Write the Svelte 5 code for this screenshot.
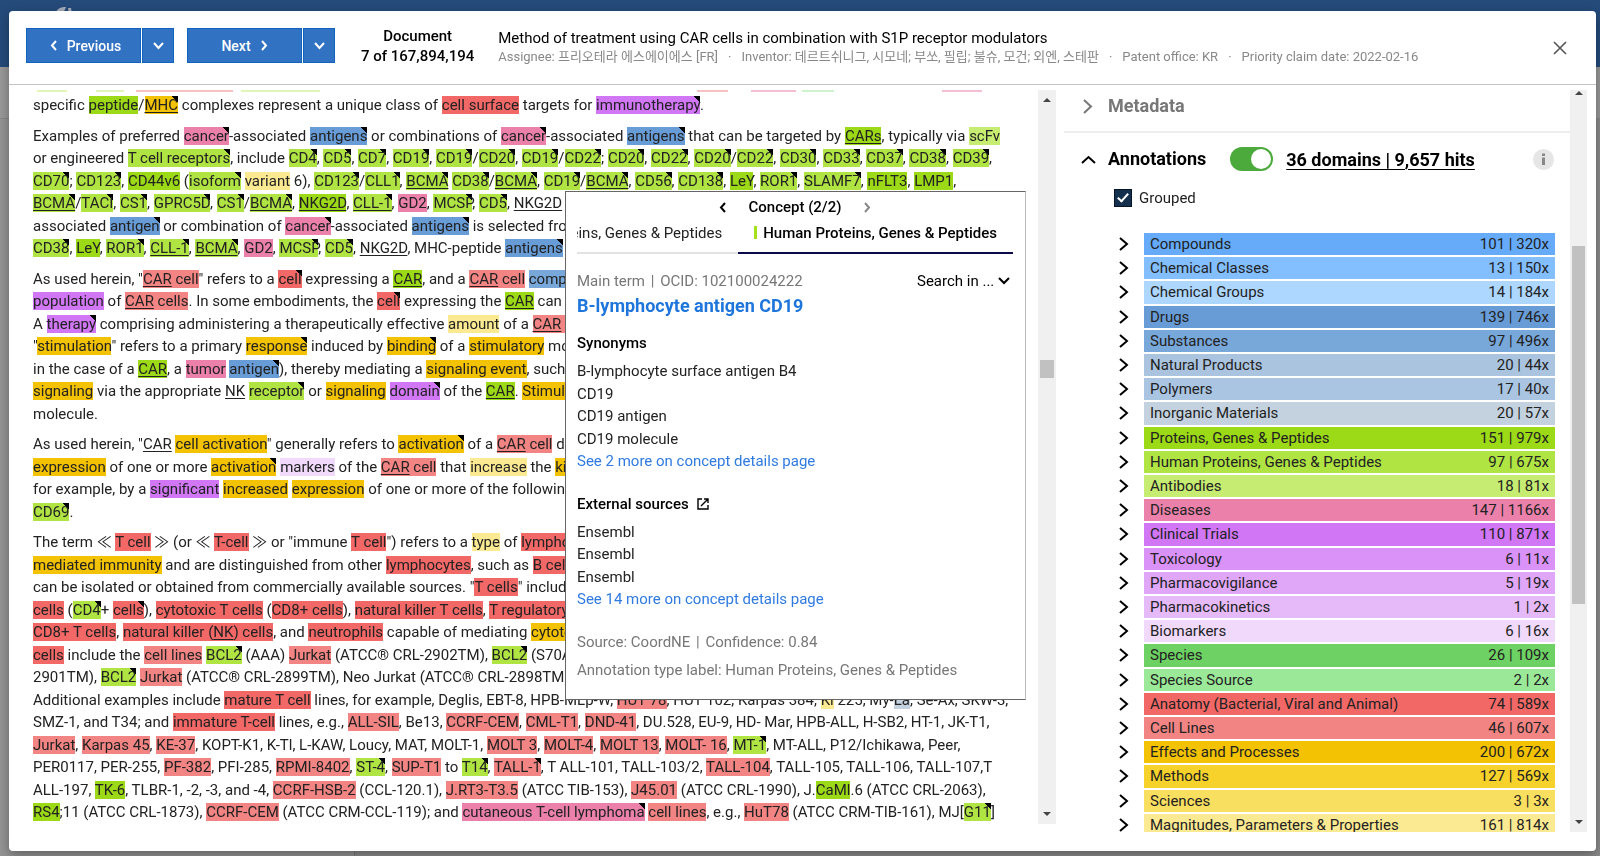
<script lang="ts">
  type Part = { text: string; underlined: boolean }
  type Token = { kind: string; corner: boolean; parts: Part[] }

  const colors: Record<string, string> = {
    compound: '#65abf9',
    chemClass: '#83beff',
    chemGroup: '#add7ff',
    drug: '#689cd6',
    substance: '#78a7da',
    natural: '#aac4e0',
    polymer: '#aac5e2',
    inorganic: '#c4d2df',
    protein: '#9cd917',
    human: '#b0e442',
    antibody: '#c6ec71',
    disease: '#eb81ab',
    clinical: '#d176f5',
    tox: '#da92f8',
    vigilance: '#e0a6f7',
    kinetics: '#e6baf8',
    biomarker: '#f0d9fb',
    species: '#6dd163',
    speciesSource: '#9be998',
    anatomy: '#f26867',
    cell: '#f28584',
    effect: '#f3c202',
    method: '#f7d22b',
    science: '#f9df5f',
    magnitude: '#fcea92',
  }

  // short codes used in the document markup: {code:text}, {code^:text} has a corner, _text_ is underlined
  const codes: Record<string, string> = {
    p: 'protein',
    h: 'human',
    b: 'antibody',
    d: 'disease',
    g: 'drug',
    s: 'substance',
    t: 'clinical',
    k: 'biomarker',
    a: 'anatomy',
    c: 'cell',
    e: 'effect',
    m: 'magnitude',
    i: 'inorganic',
  }

  const paragraphs = [
    [
      'specific {p:peptide}/{e^:_MHC_} complexes represent a unique class of {a:cell surface} targets for {t^:immunotherapy}.',
    ],
    [
      'Examples of preferred {d^:cancer}-associated {g^:antigens} or combinations of {d^:cancer}-associated {g^:antigens} that can be targeted by {p:_CARs_}, typically via {b:scFv}',
      'or engineered {h^:T cell receptors}, include {h^:CD4}, {h^:CD5}, {h^:CD7}, {h^:CD19}, {h^:CD19}/{h^:CD20}, {h^:CD19}/{h^:CD22}; {h^:CD20}, {h^:CD22}, {h^:CD20}/{h^:CD22}, {h^:CD30}, {h^:CD33}, {h^:CD37}, {h^:CD38}, {h^:CD39},',
      '{h^:CD70}; {h^:CD123}, {p:CD44v6} ({h^:isoform} {m:variant} 6), {h^:CD123}/{h^:CLL1}, {h^:_BCMA_} {h^:CD38}/{h^:_BCMA_}, {h^:CD19}/{h^:_BCMA_}, {h^:CD56}, {h^:CD138}, {p:LeY}, {h^:ROR1}, {h^:SLAMF7}, {p:nFLT3}, {p:LMP1},',
      '{h^:_BCMA_}/{h^:TACI}, {h^:CS1}, {h^:GPRC5D}, {h^:CS1}/{h^:_BCMA_}, {p:_NKG2D_}, {h^:_CLL-1_}, {d:GD2}, {h^:MCSP}, {h^:CD5}, _NKG2D_',
      'associated {g^:antigen} or combination of {d^:cancer}-associated {g^:antigens} is selected from',
      '{h^:CD38}, {p:LeY}, {h^:ROR1}, {h^:_CLL-1_}, {h^:_BCMA_}, {d:GD2}, {h^:MCSP}, {h^:CD5}, _NKG2D_, MHC-peptide {g^:antigens}',
    ],
    [
      'As used herein, "{c:_CAR_ cell}" refers to a {a^:cell} expressing a {p:_CAR_}, and a {c:_CAR_ cell} {s:compo}',
      '{t:population} of {c:_CAR_ cells}. In some embodiments, the {a^:cell} expressing the {p:_CAR_} can',
      'A {t^:therapy} comprising administering a therapeutically effective {m:amount} of a {c:_CAR_ c}',
      '"{e:stimulation}" refers to a primary {e^:response} induced by {e^:binding} of a {e:stimulatory} mo',
      'in the case of a {p:_CAR_}, a {d:tumor} {g^:antigen}), thereby mediating a {e:signaling event}, such',
      '{e:signaling} via the appropriate _NK_ {h^:receptor} or {e:signaling} {t^:domain} of the {p:_CAR_}. {e:Stimula}',
      'molecule.',
    ],
    [
      'As used herein, "_CAR_ {e:cell activation}" generally refers to {e^:activation} of a {c:_CAR_ cell} de',
      '{e:expression} of one or more {e^:activation} {k:markers} of the {c:_CAR_ cell} that {m:increase} the {e:kin}',
      'for example, by a {t:significant} {e:increased} {e:expression} of one or more of the following',
      '{h^:CD69}.',
    ],
    [
      'The term ≪ {a:T cell} ≫ (or ≪ {a:T-cell} ≫ or "immune {a:T cell}") refers to a {m:type} of {a:lymphocy}',
      '{e:mediated immunity} and are distinguished from other {a:lymphocytes}, such as {a:B cell}',
      'can be isolated or obtained from commercially available sources. "{a:T cells}" include',
      '{a:cells} ({h^:CD4}+ {a^:cells}), {a:cytotoxic T cells} ({a:CD8+ cells}), {a:natural killer T cells}, {a:T regulatory}',
      '{a:CD8+ T cells}, {a:natural killer (_NK_) cells}, and {a:neutrophils} capable of mediating {e:cytoto}',
      '{a:cells} include the {c:cell lines} {h^:BCL2} (AAA) {c:Jurkat} (ATCC® CRL-2902TM), {h^:BCL2} (S70A)',
      '2901TM), {h^:BCL2} {c:Jurkat} (ATCC® CRL-2899TM), Neo Jurkat (ATCC® CRL-2898TM)',
      'Additional examples include {a:mature T cell} lines, for example, Deglis, EBT-8, HPB-MLp-W, {c:HUT 78}, HUT 102, Karpas 384, {m:Ki} 225, My-{i:La}, Se-Ax, SKW-3,',
      'SMZ-1, and T34; and {a:immature T-cell} lines, e.g., {c:ALL-SIL}, Be13, {c:CCRF-CEM}, {c:CML-T1}, {c:DND-41}, DU.528, EU-9, HD- Mar, HPB-ALL, H-SB2, HT-1, JK-T1,',
      '{c:Jurkat}, {c:Karpas 45}, {c:KE-37}, KOPT-K1, K-Tl, L-KAW, Loucy, MAT, MOLT-1, {c:MOLT 3}, {c:MOLT-4}, {c:MOLT 13}, {c:MOLT- 16}, {h^:MT-1}, MT-ALL, P12/Ichikawa, Peer,',
      'PER0117, PER-255, {c:PF-382}, PFI-285, {c:RPMI-8402}, {h^:ST-4}, {c:SUP-T1} to {h^:T14}, {c^:TALL-1}, T ALL-101, TALL-103/2, {c:TALL-104}, TALL-105, TALL-106, TALL-107,T',
      'ALL-197, {p:TK-6}, TLBR-1, -2, -3, and -4, {c:CCRF-HSB-2} (CCL-120.1), {c:J.RT3-T3.5} (ATCC TIB-153), {c:J45.01} (ATCC CRL-1990), J.{p:CaMl}.6 (ATCC CRL-2063),',
      '{p:RS4};11 (ATCC CRL-1873), {c:CCRF-CEM} (ATCC CRM-CCL-119); and {d^:cutaneous T-cell lymphoma} {c:cell lines}, e.g., {c:HuT78} (ATCC CRM-TIB-161), MJ[{h^:G11}]',
    ],
  ]

  function splitUnderlines(text: string): Part[] {
    return text
      .split('_')
      .map((piece, i) => ({ text: piece, underlined: i % 2 === 1 }))
      .filter((part) => part.text !== '')
  }

  function parseLine(line: string): Token[] {
    return line
      .split(/(\{[^}]*\})/)
      .filter((chunk) => chunk !== '')
      .map((chunk) => {
        const match = chunk.match(/^\{(\w)(\^?):(.*)\}$/)
        if (!match) return { kind: '', corner: false, parts: splitUnderlines(chunk) }
        return { kind: codes[match[1]], corner: match[2] === '^', parts: splitUnderlines(match[3]) }
      })
  }

  const documentText = paragraphs.map((lines) => lines.map(parseLine))

  // bottom edge of the line that is scrolled out: gap before, width, kind
  const scrolledOut: [number, number, string][] = [
    [4, 30, 'antibody'],
    [29, 28, 'antibody'],
    [12, 97, 'cell'],
    [8, 79, 'antibody'],
    [377, 31, 'cell'],
    [23, 45, 'disease'],
    [6, 32, 'speciesSource'],
    [108, 40, 'disease'],
  ]

  const domains: [string, string, string][] = [
    ['Compounds', '101 | 320x', 'compound'],
    ['Chemical Classes', '13 | 150x', 'chemClass'],
    ['Chemical Groups', '14 | 184x', 'chemGroup'],
    ['Drugs', '139 | 746x', 'drug'],
    ['Substances', '97 | 496x', 'substance'],
    ['Natural Products', '20 | 44x', 'natural'],
    ['Polymers', '17 | 40x', 'polymer'],
    ['Inorganic Materials', '20 | 57x', 'inorganic'],
    ['Proteins, Genes & Peptides', '151 | 979x', 'protein'],
    ['Human Proteins, Genes & Peptides', '97 | 675x', 'human'],
    ['Antibodies', '18 | 81x', 'antibody'],
    ['Diseases', '147 | 1166x', 'disease'],
    ['Clinical Trials', '110 | 871x', 'clinical'],
    ['Toxicology', '6 | 11x', 'tox'],
    ['Pharmacovigilance', '5 | 19x', 'vigilance'],
    ['Pharmacokinetics', '1 | 2x', 'kinetics'],
    ['Biomarkers', '6 | 16x', 'biomarker'],
    ['Species', '26 | 109x', 'species'],
    ['Species Source', '2 | 2x', 'speciesSource'],
    ['Anatomy (Bacterial, Viral and Animal)', '74 | 589x', 'anatomy'],
    ['Cell Lines', '46 | 607x', 'cell'],
    ['Effects and Processes', '200 | 672x', 'effect'],
    ['Methods', '127 | 569x', 'method'],
    ['Sciences', '3 | 3x', 'science'],
    ['Magnitudes, Parameters & Properties', '161 | 814x', 'magnitude'],
  ]

  const synonyms = ['B-lymphocyte surface antigen B4', 'CD19', 'CD19 antigen', 'CD19 molecule']
  const sources = ['Ensembl', 'Ensembl', 'Ensembl']

  let annotationsOn = $state(true)
  let grouped = $state(true)
</script>

{#snippet chevron(dir: string, w: number, h: number, stroke: number)}
  <svg class="chevron" width={w} height={h} viewBox="0 0 {w} {h}" aria-hidden="true">
    {#if dir === 'left'}
      <path d="M{w - 1} 1L2 {h / 2}L{w - 1} {h - 1}" stroke-width={stroke} />
    {:else if dir === 'right'}
      <path d="M1 1L{w - 2} {h / 2}L1 {h - 1}" stroke-width={stroke} />
    {:else if dir === 'up'}
      <path d="M1 {h - 1}L{w / 2} 2L{w - 1} {h - 1}" stroke-width={stroke} />
    {:else}
      <path d="M1 1L{w / 2} {h - 2}L{w - 1} 1" stroke-width={stroke} />
    {/if}
  </svg>
{/snippet}

<div class="page">
  <div class="page-top">
    <svg width="22" height="14" viewBox="0 0 22 14" aria-hidden="true">
      <path d="M2 14C4 8 8 7 13 7L10 14Z" fill="#a5aebb" />
      <path d="M15 8h3l1 6h-3z" fill="#a5aebb" />
    </svg>
  </div>
  <div class="page-tools"></div>
  <div class="page-main"></div>
</div>

<div class="viewer" role="dialog" aria-label="Document viewer">
  <header class="viewer-header">
    <div class="split">
      <button class="split-main previous">{@render chevron('left', 7, 11, 2)}<span>Previous</span></button>
      <button class="split-drop" aria-label="Previous options">{@render chevron('down', 11, 8, 2)}</button>
    </div>
    <div class="split">
      <button class="split-main">Next{@render chevron('right', 7, 11, 2)}</button>
      <button class="split-drop" aria-label="Next options">{@render chevron('down', 11, 8, 2)}</button>
    </div>
    <div class="counter">
      <div>Document</div>
      <div>7 of 167,894,194</div>
    </div>
    <div class="doc-info">
      <h1>Method of treatment using CAR cells in combination with S1P receptor modulators</h1>
      <div class="meta">
        <span>Assignee: 프리오테라 에스에이에스 [FR]</span>
        <span>·</span>
        <span>Inventor: 데르트쉬니그, 시모네; 부쏘, 필립; 불슈, 모건; 외엔, 스테판</span>
        <span>·</span>
        <span>Patent office: KR</span>
        <span>·</span>
        <span>Priority claim date: 2022-02-16</span>
      </div>
    </div>
    <button class="close" aria-label="Close">
      <svg width="14" height="14" viewBox="0 0 14 14" aria-hidden="true">
        <path d="M1 1L13 13M13 1L1 13" stroke="#555" stroke-width="1.6" fill="none" />
      </svg>
    </button>
  </header>

  <div class="viewer-body">
    <section class="reader">
      <div class="text">
        <div class="scrolled-out">
          {#each scrolledOut as [gap, width, kind]}
            <i style:margin-left="{gap}px" style:width="{width}px" style:background={colors[kind]}></i>
          {/each}
        </div>
        {#each documentText as lines}
          <p>
            {#each lines as line}
              <span class="line"
                >{#each line as token}{#if token.kind}<mark class:corner={token.corner} style:background-color={colors[token.kind]}
                      >{#each token.parts as part}{#if part.underlined}<u>{part.text}</u>{:else}{part.text}{/if}{/each}</mark
                    >{:else}{#each token.parts as part}{#if part.underlined}<u>{part.text}</u>{:else}{part.text}{/if}{/each}{/if}{/each}</span
              >
            {/each}
          </p>
        {/each}
      </div>
      <div class="scrollbar">
        <span class="arrow up"></span>
        <div class="track"><div class="thumb" style:top="36%" style:height="18px"></div></div>
        <span class="arrow down"></span>
      </div>

      <aside class="concept">
        <div class="concept-nav">
          <button aria-label="Previous concept">{@render chevron('left', 7, 11, 2)}</button>
          <strong>Concept (2/2)</strong>
          <button class="muted" aria-label="Next concept">{@render chevron('right', 7, 11, 2)}</button>
        </div>
        <div class="tabs" role="tablist">
          <button class="tab" role="tab" aria-selected="false">Proteins, Genes &amp; Peptides</button>
          <button class="tab active" role="tab" aria-selected="true">
            <i class="tab-color"></i>Human Proteins, Genes &amp; Peptides
          </button>
        </div>
        <div class="term-row">
          <span>Main term <span class="bar-sep">|</span> OCID: 102100024222</span>
          <label class="search-in">
            <select aria-label="Search in">
              <option>Search in ...</option>
            </select>
            {@render chevron('down', 12, 8, 2)}
          </label>
        </div>
        <h2>B-lymphocyte antigen CD19</h2>

        <h3>Synonyms</h3>
        <ul>
          {#each synonyms as name}
            <li>{name}</li>
          {/each}
          <li><a href="#synonyms">See 2 more on concept details page</a></li>
        </ul>

        <h3>
          External sources
          <svg width="12" height="12" viewBox="0 0 12 12" aria-hidden="true">
            <path d="M5 1H1V11H11V7M7 1H11V5M11 1L4 8" fill="none" stroke="#000" stroke-width="1.4" />
          </svg>
        </h3>
        <ul>
          {#each sources as name}
            <li>{name}</li>
          {/each}
          <li><a href="#sources">See 14 more on concept details page</a></li>
        </ul>

        <div class="origin">
          <div>Source: CoordNE <span class="bar-sep">|</span> Confidence: 0.84</div>
          <div>Annotation type label: Human Proteins, Genes &amp; Peptides</div>
        </div>
      </aside>
    </section>

    <section class="side">
      <div class="panel">
        <div class="section-head metadata">
          <button class="section-toggle">{@render chevron('right', 10, 15, 2)}Metadata</button>
        </div>
        <div class="section-head">
          <button class="section-toggle">{@render chevron('up', 15, 9, 2)}Annotations</button>
          <input class="switch" type="checkbox" aria-label="Show annotations" bind:checked={annotationsOn} />
          <a class="hits" href="#hits">36 domains | 9,657 hits</a>
          <button class="info" aria-label="About annotations">
            <svg width="21" height="21" viewBox="0 0 21 21" aria-hidden="true">
              <circle cx="10.5" cy="10.5" r="10.5" fill="#e6e6e6" />
              <path d="M9 4.5h3v2.4H9zM9 8.5h3v7.5H9z" fill="#888" />
            </svg>
          </button>
        </div>
        <label class="grouped">
          <input type="checkbox" bind:checked={grouped} />
          Grouped
        </label>
        <ul class="domains">
          {#each domains as [name, hits, kind]}
            <li>
              <button aria-label="Expand {name}">{@render chevron('right', 10, 14, 2)}</button>
              <div class="bar" style:background={colors[kind]}>
                <span>{name}</span>
                <span>{hits}</span>
              </div>
            </li>
          {/each}
        </ul>
      </div>
      <div class="scrollbar">
        <span class="arrow up"></span>
        <div class="track"><div class="thumb" style:top="21%" style:height="50%"></div></div>
        <span class="arrow down"></span>
      </div>
    </section>
  </div>
</div>

<style>
  :global(body) {
    margin: 0;
    overflow: hidden;
    font-family: Roboto, 'Noto Sans CJK KR', sans-serif;
    font-size: 15px;
    color: #222;
  }

  button {
    display: flex;
    align-items: center;
    justify-content: center;
    padding: 0;
    border: 0;
    background: none;
    font: inherit;
    color: inherit;
    cursor: pointer;
  }

  ul {
    margin: 0;
    padding: 0;
    list-style: none;
  }

  .chevron {
    flex-shrink: 0;
  }

  .chevron path {
    fill: none;
    stroke: currentColor;
  }

  /* dimmed page behind the viewer */
  .page {
    display: flex;
    flex-direction: column;
    height: 100vh;
    background: #8e8e8e;
  }

  .page-top {
    height: 67px;
    background: #254b7b;
  }

  .page-top svg {
    display: block;
    margin-left: 53px;
  }

  .page-tools {
    height: 51px;
    background: #999;
    border-bottom: 1px solid #888;
  }

  .page-main {
    flex: 1;
    background: linear-gradient(to right, #949494 354px, #7a7a7a 354px, #7a7a7a 355px, #8c8c8c 355px);
  }

  .viewer {
    position: fixed;
    inset: 11px 4px 5px 9px;
    display: flex;
    flex-direction: column;
    background: #fff;
    border-radius: 4px;
    box-shadow: 0 4px 12px rgba(0, 0, 0, 0.35);
    overflow: hidden;
  }

  .viewer-header {
    display: flex;
    align-items: center;
    height: 74px;
    box-sizing: border-box;
    padding: 0 26px 4px 17px;
    border-bottom: 1px solid #c4c4c4;
  }

  .split {
    display: flex;
    gap: 1px;
    margin-right: 13px;
    color: #fff;
    font-size: 14px;
    font-weight: 500;
  }

  .split button {
    height: 35px;
    box-sizing: border-box;
    gap: 10px;
    background: #3172c2;
    border: 1px solid #1063c0;
  }

  .split .split-main {
    width: 115px;
  }

  .split .previous {
    padding-left: 4px;
  }

  .split .split-drop {
    width: 32px;
  }

  .counter {
    margin: 0 24px 0 13px;
    text-align: center;
    font-weight: 500;
    line-height: 20px;
    color: #000;
    white-space: nowrap;
  }

  .doc-info {
    flex: 1;
    min-width: 0;
    padding-top: 2px;
    white-space: nowrap;
  }

  h1 {
    margin: 0;
    font-size: 15px;
    font-weight: 400;
    line-height: 20px;
    color: #000;
  }

  .meta {
    display: flex;
    gap: 10px;
    font-size: 13px;
    line-height: 18px;
    color: #888;
  }

  .close {
    width: 20px;
    height: 20px;
    margin-top: 4px;
  }

  .viewer-body {
    flex: 1;
    min-height: 0;
    display: grid;
    grid-template-columns: minmax(0, 1fr) 531px;
    padding: 5px 9px 19px 24px;
  }

  .reader {
    position: relative;
    display: flex;
    min-width: 0;
    min-height: 0;
    margin-bottom: 8px;
  }

  .text {
    flex: 1;
    min-width: 0;
    overflow: hidden;
    color: #222;
    line-height: 1.5;
  }

  .scrolled-out {
    display: flex;
    height: 2px;
    margin-bottom: 2px;
    opacity: 0.5;
  }

  .scrolled-out i {
    flex-shrink: 0;
  }

  p {
    margin: 0 0 8px;
  }

  .line {
    display: block;
    white-space: pre;
  }

  mark {
    color: inherit;
  }

  /* concept has more than one annotation */
  .corner {
    background-image: linear-gradient(to bottom left, #000 50%, transparent 50%);
    background-repeat: no-repeat;
    background-position: top right;
    background-size: 6px 7px;
  }

  u {
    text-decoration-thickness: 1px;
    text-underline-offset: 2px;
    text-decoration-skip-ink: none;
  }

  .scrollbar {
    flex: 0 0 18px;
    display: flex;
    flex-direction: column;
    background: #f0f0f0;
  }

  .track {
    position: relative;
    flex: 1;
  }

  .thumb {
    position: absolute;
    left: 2px;
    right: 2px;
    background: #c1c1c1;
  }

  .arrow {
    display: flex;
    align-items: center;
    justify-content: center;
    height: 20px;
  }

  .arrow::before {
    content: '';
    border: 4px solid transparent;
  }

  .arrow.up::before {
    border-top: 0;
    border-bottom-color: #444;
  }

  .arrow.down::before {
    border-bottom: 0;
    border-top-color: #444;
  }

  .concept {
    position: absolute;
    top: 101px;
    left: 532px;
    width: 461px;
    height: 509px;
    box-sizing: border-box;
    padding: 5px 12px 0 11px;
    background: #fff;
    border: 1px solid #666;
    border-right-color: #bbb;
    color: #222;
  }

  .concept-nav {
    display: flex;
    align-items: center;
    justify-content: center;
    gap: 22px;
    height: 20px;
    color: #000;
  }

  .concept-nav strong {
    font-weight: 500;
  }

  .concept-nav .muted {
    color: #888;
  }

  .tabs {
    display: flex;
    justify-content: flex-end;
    overflow: hidden;
  }

  .tab {
    flex-shrink: 0;
    height: 37px;
    box-sizing: border-box;
    padding: 0 16px 4px;
    border-bottom: 2px solid #e2e2e2;
    white-space: nowrap;
  }

  .tab.active {
    border-bottom-color: #0a0a4a;
    font-weight: 500;
    color: #000;
  }

  .tab-color {
    width: 3px;
    height: 13px;
    margin-right: 6px;
    background: #a5e01d;
  }

  .term-row {
    display: flex;
    justify-content: space-between;
    align-items: center;
    height: 22px;
    margin-top: 16px;
    color: #777;
  }

  .bar-sep {
    padding: 0 2px;
  }

  .search-in {
    display: flex;
    align-items: center;
    gap: 3px;
    margin-right: 3px;
    color: #000;
  }

  .search-in select {
    appearance: none;
    padding: 0;
    border: 0;
    background: none;
    font: inherit;
    color: inherit;
  }

  h2 {
    margin: 2px 0 14px;
    font-size: 18px;
    font-weight: 700;
    line-height: 24px;
    color: #1e76dc;
  }

  h3 {
    display: flex;
    align-items: center;
    gap: 8px;
    margin: 0 0 6px;
    font-size: 15px;
    font-weight: 500;
    line-height: 22px;
    color: #000;
  }

  .concept ul {
    margin-bottom: 20px;
    line-height: 1.5;
  }

  .concept a {
    color: #2f7be0;
    text-decoration: none;
  }

  .origin {
    display: flex;
    flex-direction: column;
    gap: 6px;
    line-height: 22px;
    color: #777;
  }

  .side {
    display: flex;
    min-width: 0;
    min-height: 0;
    padding-left: 8px;
  }

  .side .scrollbar {
    flex-basis: 17px;
  }

  .side .arrow.up {
    height: 6px;
  }

  .panel {
    flex: 1;
    min-width: 0;
    overflow: hidden;
  }

  .section-head {
    display: flex;
    align-items: center;
    height: 52px;
    padding: 0 16px;
    font-size: 18px;
    font-weight: 700;
    color: #000;
  }

  .section-head.metadata {
    align-items: flex-start;
    height: 41px;
    border-bottom: 2px solid #eee;
    color: #777;
  }

  .section-toggle {
    display: grid;
    grid-template-columns: 16px auto;
    column-gap: 12px;
    justify-items: center;
    line-height: 32px;
  }

  .switch {
    appearance: none;
    width: 43px;
    height: 24px;
    margin: 0 13px 0 24px;
    padding: 2px;
    box-sizing: border-box;
    border-radius: 12px;
    background: #bbb;
  }

  .switch:checked {
    background: #4caa3c;
  }

  .switch::before {
    content: '';
    display: block;
    width: 20px;
    height: 20px;
    border-radius: 50%;
    background: #fff;
  }

  .switch:checked::before {
    margin-left: auto;
  }

  .hits {
    color: #000;
    text-decoration-thickness: 1px;
    text-underline-offset: 3px;
  }

  .info {
    margin-left: auto;
  }

  .grouped {
    display: flex;
    align-items: center;
    gap: 7px;
    width: max-content;
    height: 22px;
    margin: 2px 0 24px 50px;
  }

  .grouped input {
    appearance: none;
    display: grid;
    place-items: center;
    width: 18px;
    height: 18px;
    margin: 0;
    border: 1px solid #061428;
  }

  .grouped input:checked {
    background: #15304d;
  }

  .grouped input:checked::before {
    content: '';
    width: 4px;
    height: 9px;
    margin-bottom: 3px;
    border: solid #fff;
    border-width: 0 2px 2px 0;
    transform: rotate(42deg);
  }

  /* the last row runs out of view below the panel */
  .domains {
    display: grid;
    grid-auto-rows: 1fr;
    row-gap: 2px;
    height: 603px;
    margin: 0 15px 0 52px;
  }

  .domains li {
    display: flex;
    align-items: center;
  }

  .domains button {
    width: 16px;
    margin-right: 12px;
    color: #000;
  }

  .bar {
    flex: 1;
    display: flex;
    justify-content: space-between;
    align-items: center;
    align-self: stretch;
    padding: 0 6px;
  }
</style>
